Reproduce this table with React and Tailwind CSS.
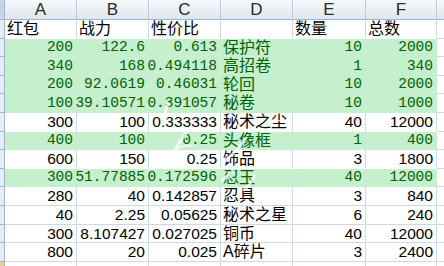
const cols = ["A", "B", "C", "D", "E", "F"];
const widths = ["w-[72px]", "w-[72px]", "w-[72px]", "w-[72px]", "w-[73px]", "w-[71px]"];

const rows = [
  { v: ["红包", "战力", "性价比", "", "数量", "总数"], kind: "head", h: "h-[19px]" },
  { v: ["200", "122.6", "0.613", "保护符", "10", "2000"], kind: "good", h: "h-[18px]" },
  { v: ["340", "168", "0.494118", "高招卷", "1", "340"], kind: "good", h: "h-[19px]" },
  { v: ["200", "92.0619", "0.46031", "轮回", "10", "2000"], kind: "good", h: "h-[18px]" },
  { v: ["100", "39.10571", "0.391057", "秘卷", "10", "1000"], kind: "good", h: "h-[19px]" },
  { v: ["300", "100", "0.333333", "秘术之尘", "40", "12000"], kind: "plain", h: "h-[19px]" },
  { v: ["400", "100", "0.25", "头像框", "1", "400"], kind: "good", h: "h-[18px]" },
  { v: ["600", "150", "0.25", "饰品", "3", "1800"], kind: "plain", h: "h-[19px]" },
  { v: ["300", "51.77885", "0.172596", "忍玉", "40", "12000"], kind: "good", h: "h-[18px]" },
  { v: ["280", "40", "0.142857", "忍具", "3", "840"], kind: "plain", h: "h-[19px]" },
  { v: ["40", "2.25", "0.05625", "秘术之星", "6", "240"], kind: "plain", h: "h-[19px]" },
  { v: ["300", "8.107427", "0.027025", "铜币", "40", "12000"], kind: "plain", h: "h-[18px]" },
  { v: ["800", "20", "0.025", "A碎片", "3", "2400"], kind: "plain", h: "h-[19px]" },
  { v: ["", "", "", "", "", ""], kind: "plain", h: "h-[19px]" },
];

function Cell({ value, col, kind, nextGood, width }) {
  const good = kind === "good";
  const isText = kind === "head" || col === 3;
  const border = good
    ? "border-r border-b border-[#c6efce]"
    : nextGood
    ? "border-r border-b border-r-[#d0d7e5] border-b-white"
    : "border-r border-b border-[#d0d7e5]";
  const bg = good ? "bg-[#c6efce]" : "bg-white";
  const color = good ? "text-[#006100]" : "text-black";
  const font = isText
    ? "font-['Liberation_Sans','Noto_Sans_CJK_SC',sans-serif] text-[16px] justify-start pl-[2px]"
    : good
    ? "font-['Liberation_Mono',monospace] text-[14.5px] justify-end pr-[3px]"
    : "font-['Liberation_Sans',sans-serif] text-[15.5px] justify-end pr-[3px]";
  return (
    <div className={`${width} shrink-0 h-full flex items-center leading-none whitespace-nowrap overflow-visible ${bg} ${border} ${color} ${font}`}>
      {value}
    </div>
  );
}

export default function App() {
  return (
    <div className="relative w-[444px] h-[266px] overflow-hidden bg-white select-none">
      {/* column header */}
      <div className="flex h-[20px]">
        <div className="w-[5px] shrink-0 bg-[#c9d5e4] border-r border-b border-[#9eb6ce]" />
        {cols.map((c, i) => (
          <div
            key={c}
            className={`${widths[i]} shrink-0 flex items-center justify-center bg-gradient-to-b from-[#f6f8fb] to-[#dfe6ef] border-r border-r-[#c3ccd8] border-b border-b-[#9eb6ce] text-[17px] text-[#2a2a2a] font-['Liberation_Sans',sans-serif]`}
          >
            {c}
          </div>
        ))}
        <div className="flex-1 bg-gradient-to-b from-[#f6f8fb] to-[#dfe6ef] border-b border-[#9eb6ce]" />
      </div>

      {rows.map((r, ri) => {
        const nextGood = rows[ri + 1]?.kind === "good";
        return (
          <div key={ri} className={`flex ${r.h}`}>
            <div
              className={`w-[5px] shrink-0 border-r border-b border-[#9eb6ce] ${
                ri === rows.length - 1 ? "bg-[#f5c983]" : "bg-[#e4ecf7]"
              }`}
            />
            {r.v.map((v, ci) => (
              <Cell key={ci} value={v} col={ci} kind={r.kind} nextGood={nextGood} width={widths[ci]} />
            ))}
            <div className="flex-1 bg-white border-b border-[#d0d7e5]" />
          </div>
        );
      })}

      {/* faint watermark strokes */}
      <svg className="absolute left-0 top-0 pointer-events-none" width="444" height="266" viewBox="0 0 444 266">
        <g fill="none" stroke="white" strokeLinecap="round" strokeOpacity="0.75">
          <path d="M168 104 q-4 8 -2 14" strokeWidth="3" />
          <path d="M190 128 q-14 18 -24 38" strokeWidth="3" />
          <path d="M176 150 q8 -6 16 -4" strokeWidth="2" />
          <path d="M246 138 q-10 14 -22 24" strokeWidth="3" />
          <path d="M236 166 q-6 10 -14 14" strokeWidth="3" />
          <path d="M254 176 q-4 10 -10 14" strokeWidth="3" />
        </g>
      </svg>
    </div>
  );
}
